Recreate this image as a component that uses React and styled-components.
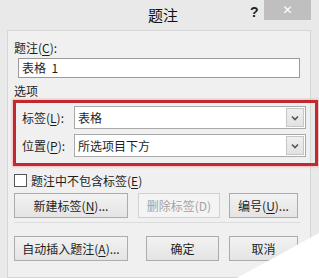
import React from 'react';
import styled, { createGlobalStyle } from 'styled-components';

const GlobalStyle = createGlobalStyle`
  html, body {
    margin: 0;
    padding: 0;
    background: #e9e9e9;
  }
  body {
    font-family: "Noto Sans CJK SC", "Noto Sans", sans-serif;
    font-size: 12px;
    color: #1e1e1e;
  }
`;

const Window = styled.div`
  position: relative;
  width: 319px;
  height: 278px;
  overflow: hidden;
  background: #e9e9e9;
  display: flex;
  flex-direction: column;
`;

const TitleBar = styled.div`
  height: 30px;
  display: flex;
  align-items: flex-start;
  flex-shrink: 0;
`;

const Title = styled.div`
  flex: 1;
  padding-left: 76px;
  text-align: center;
  font-size: 15px;
  line-height: 30px;
  color: #111;
`;

const Help = styled.div`
  width: 11px;
  font-family: "Liberation Sans", sans-serif;
  font-weight: bold;
  font-size: 14px;
  line-height: 24px;
  color: #222;
`;

const Close = styled.div`
  width: 47px;
  height: 20px;
  margin-left: 3px;
  margin-right: 8px;
  background: #bfbfbf;
  color: #fff;
  font-family: "DejaVu Sans", sans-serif;
  font-size: 12px;
  font-weight: bold;
  line-height: 20px;
  text-align: center;
`;

const Panel = styled.div`
  margin: 0 8px 0 7px;
  height: 240px;
  border: 1px solid #d6d6d6;
  background: #f0f0f0;
  padding: 9px 0 0 6px;
  display: flex;
  flex-direction: column;
`;

const Label = styled.div`
  line-height: 16px;
  height: 16px;
  margin-top: ${p => p.top || 0}px;
  white-space: nowrap;
`;

const Key = styled.span`
  text-decoration: underline;
  text-underline-offset: 2px;
`;

const TextInput = styled.div`
  margin: 2px 0 0 4px;
  width: 277px;
  height: 18px;
  border: 1px solid #9a9a9a;
  background: #fff;
  line-height: 18px;
  padding-left: 3px;
  white-space: pre;
`;

const Highlight = styled.div`
  margin: 1px 0 0 -1px;
  width: 293px;
  height: 57px;
  border: 3px solid #bf2a2f;
  box-shadow: 0 0 2px 1px #f3b9bb;
  padding: 3px 0 0 6px;
  display: flex;
  flex-direction: column;
  gap: 5px;
`;

const FieldRow = styled.div`
  display: flex;
  align-items: center;
`;

const FieldLabel = styled.div`
  width: 52px;
  line-height: 21px;
`;

const Select = styled.div`
  width: 230px;
  height: 21px;
  border: 1px solid #a9a9a9;
  background: #fff;
  display: flex;
  align-items: stretch;
`;

const SelectValue = styled.div`
  flex: 1;
  padding-left: 3px;
  line-height: 21px;
`;

const Arrow = styled.div`
  width: 16px;
  margin: 1px;
  background: linear-gradient(#efefef, #e2e2e2);
  border: 1px solid #c6c6c6;
  display: flex;
  align-items: center;
  justify-content: center;
`;

const CheckRow = styled.div`
  display: flex;
  align-items: center;
  margin-top: 7px;
  gap: 4px;
  height: 14px;
`;

const Box = styled.div`
  width: 11px;
  height: 11px;
  border: 1px solid #555;
  background: #fff;
`;

const ButtonRow = styled.div`
  display: flex;
  align-items: center;
  margin-top: ${p => p.top}px;
`;

const Button = styled.div`
  width: ${p => p.w}px;
  height: 23px;
  margin-left: ${p => p.gap || 0}px;
  border: 1px solid ${p => (p.disabled ? '#d2d2d2' : '#acacac')};
  background: ${p => (p.disabled ? '#f4f4f4' : 'linear-gradient(#f2f2f2, #e4e4e4)')};
  color: ${p => (p.disabled ? '#a3a3a3' : '#1e1e1e')};
  line-height: 23px;
  text-align: center;
  white-space: nowrap;
`;

const Separator = styled.div`
  margin-top: 4px;
  width: 286px;
  height: 1px;
  background: #dcdcdc;
`;

const Corner = styled.div`
  position: absolute;
  right: 0;
  bottom: 0;
  width: 82px;
  height: 45px;
  background: #fff;
  clip-path: polygon(0 100%, 100% 0, 100% 100%);
`;

function Chevron() {
  return (
    <svg width="8" height="6" viewBox="0 0 8 6">
      <path d="M1 1.5 L4 4.5 L7 1.5" fill="none" stroke="#555" strokeWidth="1.6" />
    </svg>
  );
}

export default function App() {
  return (
    <Window>
      <GlobalStyle />
      <TitleBar>
        <Title>题注</Title>
        <Help>?</Help>
        <Close>✕</Close>
      </TitleBar>
      <Panel>
        <Label>题注(<Key>C</Key>):</Label>
        <TextInput>{'表格  1'}</TextInput>
        <Label top={5}>选项</Label>
        <Highlight>
          <FieldRow>
            <FieldLabel>标签(<Key>L</Key>):</FieldLabel>
            <Select>
              <SelectValue>表格</SelectValue>
              <Arrow><Chevron /></Arrow>
            </Select>
          </FieldRow>
          <FieldRow>
            <FieldLabel>位置(<Key>P</Key>):</FieldLabel>
            <Select>
              <SelectValue>所选项目下方</SelectValue>
              <Arrow><Chevron /></Arrow>
            </Select>
          </FieldRow>
        </Highlight>
        <CheckRow>
          <Box />
          <span>题注中不包含标签(<Key>E</Key>)</span>
        </CheckRow>
        <ButtonRow top={6}>
          <Button w={112}>新建标签(<Key>N</Key>)...</Button>
          <Button w={80} gap={10} disabled>删除标签(D)</Button>
          <Button w={67} gap={9}>编号(<Key>U</Key>)...</Button>
        </ButtonRow>
        <Separator />
        <ButtonRow top={13}>
          <Button w={112}>自动插入题注(<Key>A</Key>)...</Button>
          <Button w={71} gap={18}>确定</Button>
          <Button w={67} gap={10}>取消</Button>
        </ButtonRow>
      </Panel>
      <Corner />
    </Window>
  );
}
